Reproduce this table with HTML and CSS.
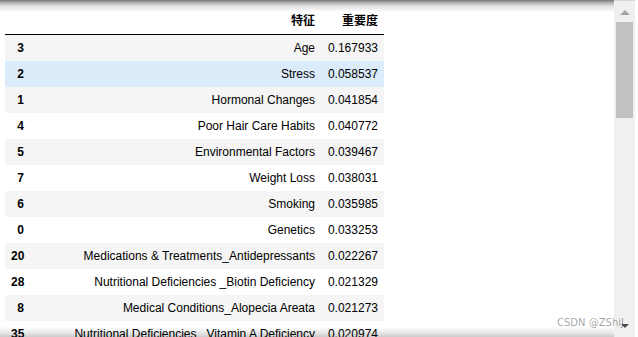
FILE: index.html
```html
<!DOCTYPE html>
<html>
<head>
<meta charset="utf-8">
<link rel="stylesheet" href="styles.css">
</head>
<body>
<div class="frame">
  <div class="output">
    <table class="df">
      <colgroup><col class="c-idx"><col class="c-feat"><col class="c-val"></colgroup>
      <thead>
        <tr><th></th><th>特征</th><th>重要度</th></tr>
      </thead>
      <tbody>
        <tr><th>3</th><td>Age</td><td>0.167933</td></tr>
        <tr class="hl"><th>2</th><td>Stress</td><td>0.058537</td></tr>
        <tr><th>1</th><td>Hormonal Changes</td><td>0.041854</td></tr>
        <tr><th>4</th><td>Poor Hair Care Habits</td><td>0.040772</td></tr>
        <tr><th>5</th><td>Environmental Factors</td><td>0.039467</td></tr>
        <tr><th>7</th><td>Weight Loss</td><td>0.038031</td></tr>
        <tr><th>6</th><td>Smoking</td><td>0.035985</td></tr>
        <tr><th>0</th><td>Genetics</td><td>0.033253</td></tr>
        <tr><th>20</th><td>Medications &amp; Treatments_Antidepressants</td><td>0.022267</td></tr>
        <tr><th>28</th><td>Nutritional Deficiencies _Biotin Deficiency</td><td>0.021329</td></tr>
        <tr><th>8</th><td>Medical Conditions_Alopecia Areata</td><td>0.021273</td></tr>
        <tr><th>35</th><td>Nutritional Deficiencies _Vitamin A Deficiency</td><td>0.020974</td></tr>
      </tbody>
    </table>
    <div class="shade-top"></div>
    <div class="shade-bottom"></div>
  </div>
  <div class="scrollbar">
    <div class="arrow-up"></div>
    <div class="thumb"></div>
    <div class="track-rest"></div>
    <div class="arrow-down"></div>
  </div>
  <div class="edge"></div>
  <div class="watermark">CSDN @ZShiJ</div>
</div>
</body>
</html>
```
FILE: styles.css
```css
html, body {
  margin: 0;
  padding: 0;
  background: #ffffff;
}
body {
  font-family: "Liberation Sans", Arial, "Noto Sans CJK SC", sans-serif;
  font-size: 12px;
  color: #000;
}
.frame {
  display: flex;
  height: 337px;
  overflow: hidden;
  position: relative;
}
.output {
  width: 614px;
  flex: none;
  position: relative;
  overflow: hidden;
  padding: 8px 0 0 5px;
  box-sizing: border-box;
}
.df {
  border-collapse: collapse;
  table-layout: fixed;
  width: 379px;
  border: none;
}
.c-idx { width: 25px; }
.c-feat { width: 291px; }
.c-val { width: 63px; }
.df th, .df td {
  padding: 6px 6px;
  line-height: 14px;
  text-align: right;
  white-space: nowrap;
  overflow: hidden;
}
.df thead th {
  font-weight: bold;
  font-family: "Liberation Sans", "Noto Sans CJK SC", sans-serif;
  border-bottom: 1px solid #000;
}
.df tbody th {
  font-weight: bold;
}
.df tbody tr:nth-child(odd) {
  background: #f5f5f5;
}
.df tbody tr.hl {
  background: #dbebf9;
}
.shade-top {
  position: absolute;
  left: 0;
  top: 0;
  right: 0;
  height: 12px;
  background: linear-gradient(to bottom, rgba(0,0,0,0.55) 0px, rgba(0,0,0,0.35) 2px, rgba(0,0,0,0.12) 6px, rgba(0,0,0,0) 12px);
}
.shade-bottom {
  position: absolute;
  left: 0;
  bottom: 0;
  right: 0;
  height: 10px;
  background: linear-gradient(to bottom, rgba(0,0,0,0) 0px, rgba(0,0,0,0.08) 5px, rgba(0,0,0,0.2) 10px);
}
.scrollbar {
  width: 21px;
  flex: none;
  background: #f0f0f0;
  border-top: 1px solid #d4d4d4;
  box-sizing: border-box;
  display: flex;
  flex-direction: column;
  align-items: center;
}
.arrow-up {
  margin-top: 9px;
  width: 0;
  height: 0;
  border-left: 5px solid transparent;
  border-right: 5px solid transparent;
  border-bottom: 5px solid #a3a3a3;
}
.thumb {
  margin-top: 7px;
  width: 17px;
  height: 96px;
  background: #c1c1c1;
}
.track-rest {
  flex: 1;
}
.arrow-down {
  margin-bottom: 9px;
  width: 0;
  height: 0;
  border-left: 4px solid transparent;
  border-right: 4px solid transparent;
  border-top: 4px solid #505050;
}
.edge {
  flex: 1;
  background: #ffffff;
}
.watermark {
  position: absolute;
  left: 557px;
  top: 317px;
  font-family: "DejaVu Sans", "Noto Sans CJK SC", sans-serif;
  font-size: 10px;
  color: rgba(0,0,0,0.38);
  white-space: nowrap;
}
```
